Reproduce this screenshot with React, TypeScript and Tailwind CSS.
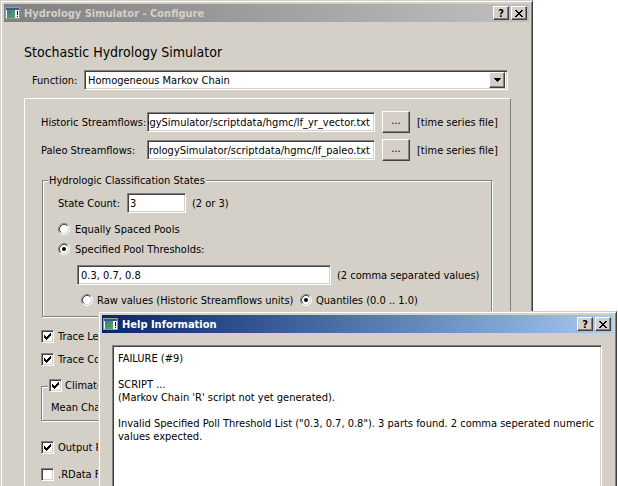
import type { ReactNode } from "react";

const FONT = "font-[family-name:'DejaVu_Sans_Condensed','Liberation_Sans',sans-serif]";

const RAISED =
  "border border-t-white border-l-white border-r-[#404040] border-b-[#404040] shadow-[inset_-1px_-1px_0_#808080] bg-[#d4d0c8]";
const SUNKEN =
  "border border-t-[#808080] border-l-[#808080] border-r-white border-b-white shadow-[inset_1px_1px_0_#404040,inset_-1px_-1px_0_#d4d0c8] bg-white";
const ETCHED = "border border-[#808080] shadow-[inset_1px_1px_0_#fff,1px_1px_0_#fff]";

function AppIcon({ id }: { id: string }) {
  return (
    <svg width="16" height="16" viewBox="0 0 16 16" className="ml-[1px] shrink-0">
      <defs>
        <linearGradient id={id} x1="0" y1="0" x2="1" y2="1">
          <stop offset="0" stopColor="#2e7f8c" />
          <stop offset="1" stopColor="#63a35a" />
        </linearGradient>
      </defs>
      <rect x="0.5" y="2.5" width="14" height="11" fill="#f4f4f4" stroke="#9a9a9a" />
      <rect x="1" y="3" width="13" height="2" fill="#3a5a8a" />
      <rect x="2" y="5" width="8" height="8" fill={`url(#${id})`} />
      <rect x="12" y="6" width="1" height="4" fill="#000" />
      <rect x="12" y="11" width="1" height="1" fill="#000" />
    </svg>
  );
}

function CloseGlyph() {
  const rows = [0, 1, 2, 3, 4, 5, 6];
  return (
    <svg width="8" height="7" viewBox="0 0 8 7" shapeRendering="crispEdges">
      {rows.map((r) => (
        <g key={r} fill="#000">
          <rect x={r} y={r} width="2" height="1" />
          <rect x={6 - r} y={r} width="2" height="1" />
        </g>
      ))}
    </svg>
  );
}

function CaptionButton({ children, className = "" }: { children: ReactNode; className?: string }) {
  return (
    <span
      className={`flex h-[14px] w-[16px] shrink-0 items-center justify-center text-[11px] font-bold leading-none text-black ${RAISED} ${className}`}
    >
      {children}
    </span>
  );
}

function TitleBar({ title, active, iconId }: { title: string; active?: boolean; iconId: string }) {
  return (
    <div
      className={`flex h-[18px] shrink-0 items-center ${
        active
          ? "bg-linear-to-r from-[#0a246a] to-[#a6caf0] text-white"
          : "bg-linear-to-r from-[#808080] to-[#c0c0c0] text-[#d4d0c8]"
      }`}
    >
      <AppIcon id={iconId} />
      <span className="ml-[3px] flex-1 font-bold">{title}</span>
      <CaptionButton>?</CaptionButton>
      <CaptionButton className="ml-[2px] mr-[2px]">
        <CloseGlyph />
      </CaptionButton>
    </div>
  );
}

function Checkbox({ checked }: { checked?: boolean }) {
  const pixels: [number, number, number][] = [
    [6, 0, 1],
    [5, 1, 2],
    [0, 2, 1],
    [4, 2, 3],
    [0, 3, 2],
    [3, 3, 3],
    [0, 4, 5],
    [1, 5, 3],
    [2, 6, 1],
  ];
  return (
    <span className={`flex h-[13px] w-[13px] shrink-0 items-center justify-center ${SUNKEN}`}>
      {checked && (
        <svg width="7" height="7" viewBox="0 0 7 7" shapeRendering="crispEdges">
          {pixels.map(([x, y, w], i) => (
            <rect key={i} x={x} y={y} width={w} height="1" fill="#000" />
          ))}
        </svg>
      )}
    </span>
  );
}

function Radio({ checked }: { checked?: boolean }) {
  return (
    <svg width="12" height="12" viewBox="0 0 12 12" className="shrink-0">
      <circle cx="6" cy="6" r="5" fill="#fff" />
      <path d="M9.89 2.11 A5.5 5.5 0 0 0 2.11 9.89" stroke="#808080" fill="none" />
      <path d="M2.11 9.89 A5.5 5.5 0 0 0 9.89 2.11" stroke="#fff" fill="none" />
      <path d="M9.18 2.82 A4.5 4.5 0 0 0 2.82 9.18" stroke="#404040" fill="none" />
      <path d="M2.82 9.18 A4.5 4.5 0 0 0 9.18 2.82" stroke="#d4d0c8" fill="none" />
      {checked && <circle cx="6" cy="6" r="2" fill="#000" />}
    </svg>
  );
}

function FileRow({ label, value, className = "" }: { label: string; value: string; className?: string }) {
  return (
    <div className={`flex h-[22px] items-center ${className}`}>
      <span className="w-[106px] shrink-0">{label}</span>
      <div className={`flex h-[20px] w-[228px] shrink-0 items-center justify-end overflow-hidden pr-[4px] ${SUNKEN}`}>
        <span className="whitespace-nowrap">{value}</span>
      </div>
      <span className={`ml-[7px] flex h-[22px] w-[28px] shrink-0 items-center justify-center pb-[3px] ${RAISED}`}>
        ...
      </span>
      <span className="ml-[7px]">[time series file]</span>
    </div>
  );
}

function CheckRow({ label, checked, className = "" }: { label: string; checked?: boolean; className?: string }) {
  return (
    <div className={`flex h-[15px] items-center ${className}`}>
      <Checkbox checked={checked} />
      <span className="ml-[4px] whitespace-nowrap">{label}</span>
    </div>
  );
}

function ConfigureWindow() {
  return (
    <div className="flex h-[560px] w-[533px] flex-col border border-t-[#d4d0c8] border-l-[#d4d0c8] border-r-[#404040] border-b-[#404040] bg-[#d4d0c8] p-[3px] shadow-[inset_1px_1px_0_#fff,inset_-1px_-1px_0_#808080]">
      <TitleBar title="Hydrology Simulator - Configure" iconId="icoMain" />
      <div className="flex flex-1 flex-col">
        <div className="ml-[20px] mt-[20px] flex h-[20px] items-center text-[14px]">
          Stochastic Hydrology Simulator
        </div>
        <div className="ml-[28px] mt-[8px] flex h-[20px] items-center">
          <span className="w-[52px] shrink-0">Function:</span>
          <div className={`flex h-[20px] w-[424px] items-center ${SUNKEN}`}>
            <span className="flex-1 pl-[3px]">Homogeneous Markov Chain</span>
            <span className={`mr-[2px] flex h-[16px] w-[16px] items-center justify-center ${RAISED}`}>
              <svg width="7" height="4" viewBox="0 0 7 4" shapeRendering="crispEdges">
                <path d="M0 0h7v1H6v1H5v1H4v1H3V3H2V2H1V1H0z" fill="#000" />
              </svg>
            </span>
          </div>
        </div>

        <div className="ml-[20px] mt-[8px] flex w-[487px] flex-1 flex-col border border-t-white border-l-white border-r-[#808080] border-b-[#808080] pl-[16px] pt-[12px]">
          <FileRow label="Historic Streamflows:" value="ogySimulator/scriptdata/hgmc/lf_yr_vector.txt" />
          <FileRow
            className="mt-[6px]"
            label="Paleo Streamflows:"
            value="drologySimulator/scriptdata/hgmc/lf_paleo.txt"
          />

          <div className={`ml-[1px] mt-[19px] flex h-[137px] w-[450px] flex-col ${ETCHED}`}>
            <span className="-mt-[7px] ml-[5px] h-[13px] self-start bg-[#d4d0c8] px-[1px]">
              Hydrologic Classification States
            </span>
            <div className="mt-[6px] flex h-[20px] items-center pl-[15px]">
              <span className="w-[69px] shrink-0">State Count:</span>
              <div className={`flex h-[20px] w-[59px] items-center pl-[2px] ${SUNKEN}`}>3</div>
              <span className="ml-[6px]">(2 or 3)</span>
            </div>
            <div className="mt-[8px] flex h-[16px] items-center pl-[15px]">
              <Radio />
              <span className="ml-[5px]">Equally Spaced Pools</span>
            </div>
            <div className="mt-[4px] flex h-[16px] items-center pl-[15px]">
              <Radio checked />
              <span className="ml-[5px]">Specified Pool Thresholds:</span>
            </div>
            <div className="mt-[8px] flex h-[20px] items-center pl-[34px]">
              <div className={`flex h-[20px] w-[254px] items-center pl-[3px] ${SUNKEN}`}>0.3, 0.7, 0.8</div>
              <span className="ml-[6px]">(2 comma separated values)</span>
            </div>
            <div className="mt-[7px] flex h-[16px] items-center pl-[38px]">
              <div className="flex w-[219px] shrink-0 items-center">
                <Radio />
                <span className="ml-[4px] whitespace-nowrap">Raw values (Historic Streamflows units)</span>
              </div>
              <Radio checked />
              <span className="ml-[4px]">Quantiles (0.0 .. 1.0)</span>
            </div>
          </div>

          <CheckRow className="mt-[12px]" label="Trace Length:" checked />
          <CheckRow className="mt-[8px]" label="Trace Count:" checked />

          <div className={`mt-[19px] flex h-[35px] w-[450px] flex-col ${ETCHED}`}>
            <div className="-mt-[8px] ml-[6px] flex h-[13px] items-center self-start bg-[#d4d0c8] pl-[1px] pr-[2px]">
              <Checkbox checked />
              <span className="ml-[3px]">Climate</span>
            </div>
            <div className="mt-[7px] flex h-[16px] items-center pl-[9px]">Mean Change:</div>
          </div>

          <CheckRow className="mt-[19px]" label="Output R Script" checked />
          <CheckRow className="mt-[12px]" label=".RData File" />
        </div>
      </div>
    </div>
  );
}

function HelpWindow() {
  return (
    <div className="absolute left-[98px] top-[311px] flex h-[200px] w-[519px] flex-col border border-t-[#d4d0c8] border-l-[#d4d0c8] border-r-[#404040] border-b-[#404040] bg-[#d4d0c8] p-[3px] shadow-[inset_1px_1px_0_#fff,inset_-1px_-1px_0_#808080]">
      <TitleBar title="Help Information" active iconId="icoHelp" />
      <div className={`ml-[10px] mt-[12px] w-[490px] flex-1 whitespace-pre-line pl-[5px] pt-[6px] ${SUNKEN}`}>
        {
          "FAILURE (#9)\n\nSCRIPT ...\n(Markov Chain 'R' script not yet generated).\n\nInvalid Specified Poll Threshold List (\"0.3, 0.7, 0.8\"). 3 parts found. 2 comma seperated numeric\nvalues expected."
        }
      </div>
    </div>
  );
}

export default function App() {
  return (
    <div className={`relative h-[486px] w-[618px] overflow-hidden bg-white text-[11px] leading-[13px] text-black ${FONT}`}>
      <ConfigureWindow />
      <HelpWindow />
    </div>
  );
}
